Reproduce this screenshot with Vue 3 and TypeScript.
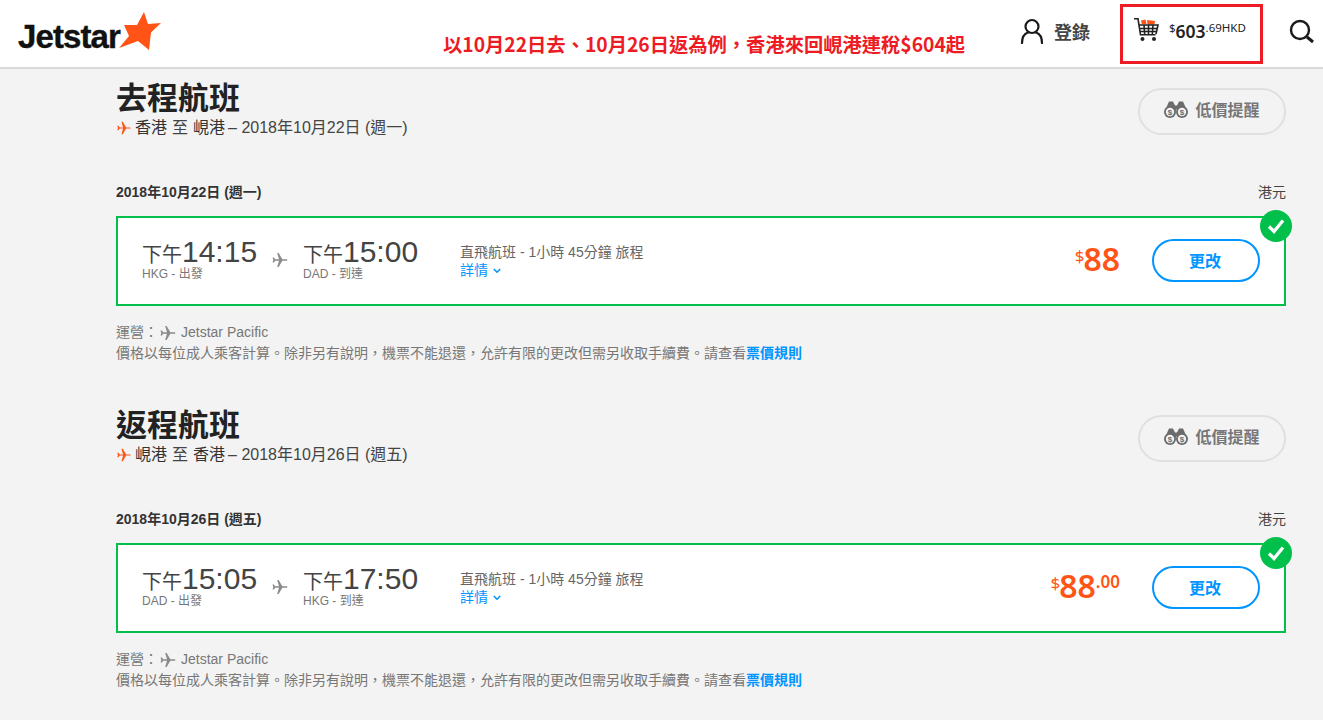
<script setup lang="ts">
interface Flight {
  title: string
  from: string
  to: string
  date: string
  dep: string
  arr: string
  depCode: string
  arrCode: string
  cents: string
}
const flights: Flight[] = [
  { title: '去程航班', from: '香港', to: '峴港', date: '2018年10月22日 (週一)', dep: '14:15', arr: '15:00', depCode: 'HKG', arrCode: 'DAD', cents: '' },
  { title: '返程航班', from: '峴港', to: '香港', date: '2018年10月26日 (週五)', dep: '15:05', arr: '17:50', depCode: 'DAD', arrCode: 'HKG', cents: '.00' },
]
const plane = 'M21 12.6c0-.8-.7-1.400-1.600-1.400h-4.600L10.400 3.600H8.600l2.200 7.600H6.300L4.600 9H3l1 3-1 3h1.600l1.700-2.200h4.500l-2.200 7.600h1.800l4.400-7.600h4.600c.9 0 1.600-.4 1.600-1.200z'
</script>

<template>
  <div class="page">
    <header class="topbar">
      <div class="logo">
        <span class="logo-text">Jetstar</span>
        <svg class="logo-star" viewBox="0 0 42 38" width="42" height="38"><path d="M25 0l4 12 13-1-10 9.500L30 38 19 29 0 36l10-12-5-11 13 0z" fill="#ff5416"/></svg>
      </div>
      <div class="promo">以10月22日去、10月26日返為例，香港來回峴港連稅$604起</div>
      <div class="login">
        <svg width="24" height="26" viewBox="0 0 24 26" fill="none" stroke="#1a1a1a" stroke-width="2.200"><circle cx="12" cy="8.500" r="6.500"/><path d="M2 25c0-6 3-9.500 6-10.500M22 25c0-6-3-9.500-6-10.500" stroke-linecap="round"/></svg>
        <span>登錄</span>
      </div>
      <div class="cart">
        <svg width="25" height="24" viewBox="0 0 25 24">
          <path d="M7 2.500l4.500-1 1 4.500H7.800z" fill="#ff5416"/><path d="M13 2l8 1-.5 3.500H13.500z" fill="#ff5416"/>
          <path d="M0 .8h4l2.500 16h15M5 7h19l-2 9M5.800 10.500H23M6.300 13.500h16M10 7l.7 9.500M14.500 7v9.500M19 7l-.7 9.500" fill="none" stroke="#222" stroke-width="1.600"/>
          <circle cx="8.500" cy="21" r="2" fill="#222"/><circle cx="20" cy="21" r="2" fill="#222"/>
        </svg>
        <div class="cart-price"><sup>$</sup><b>603</b><sup>.69HKD</sup></div>
      </div>
      <svg class="search" width="26" height="26" viewBox="0 0 26 26" fill="none" stroke="#1a1a1a"><circle cx="11" cy="11" r="9" stroke-width="2.400"/><path d="M18 18l6 5" stroke-width="3"/></svg>
    </header>

    <main class="main">
      <section v-for="f in flights" :key="f.title" class="leg">
        <div class="leg-head">
          <div>
            <h1>{{ f.title }}</h1>
            <div class="route">
              <svg class="route-plane" width="18" height="18" viewBox="0 0 24 24"><path :d="plane" fill="#ff5416"/></svg>
              <b>{{ f.from }}</b><span>至</span><b>{{ f.to }}</b><span class="route-date">– {{ f.date }}</span>
            </div>
          </div>
          <button class="alert">
            <svg width="24" height="18" viewBox="0 0 24 18">
              <path d="M5 1.500h4l2 4h2l2-4h4l4 9h-9l-1-2-1 2H1z" fill="#6b6b6b"/>
              <circle cx="6" cy="12" r="6" fill="#6b6b6b"/><circle cx="18" cy="12" r="6" fill="#6b6b6b"/>
              <circle cx="6" cy="12" r="4.200" fill="#f3f3f3"/><circle cx="18" cy="12" r="4.200" fill="#f3f3f3"/>
              <text x="6" y="15" class="lens">$</text><text x="18" y="15" class="lens">$</text>
            </svg>
            <span>低價提醒</span>
          </button>
        </div>

        <div class="date-row"><b>{{ f.date }}</b><span>港元</span></div>

        <div class="card">
          <div class="time dep">
            <div class="clock"><span>下午</span>{{ f.dep }}</div>
            <div class="code">{{ f.depCode }} - 出發</div>
          </div>
          <svg class="mid-plane" width="20" height="20" viewBox="0 0 24 24"><path :d="plane" fill="#8b8b8b"/></svg>
          <div class="time arr">
            <div class="clock"><span>下午</span>{{ f.arr }}</div>
            <div class="code">{{ f.arrCode }} - 到達</div>
          </div>
          <div class="info">
            <div>直飛航班 - 1小時 45分鐘 旅程</div>
            <a>詳情 <svg width="8" height="6" viewBox="0 0 8 6" fill="none" stroke="#0095ff" stroke-width="1.600"><path d="M.8 1l3.200 3.200L7.200 1"/></svg></a>
          </div>
          <div class="price"><sup>$</sup><b>88</b><sup v-if="f.cents" class="cents">{{ f.cents }}</sup></div>
          <button class="change">更改</button>
          <div class="check">
            <svg width="18" height="16" viewBox="0 0 18 16" fill="none" stroke="#fff" stroke-width="3.200"><path d="M2 8.500l5 5 9-11"/></svg>
          </div>
        </div>

        <div class="notes">
          <div class="op">運營：<svg width="20" height="20" viewBox="0 0 24 24"><path :d="plane" fill="#8b8b8b"/></svg>Jetstar Pacific</div>
          <div>價格以每位成人乘客計算。除非另有說明，機票不能退還，允許有限的更改但需另收取手續費。請查看<a>票價規則</a></div>
        </div>
      </section>
    </main>
  </div>
</template>

<style>
html, body { margin: 0; background: #f3f3f3; }
</style>

<style scoped>
.page {
  height: 720px;
  overflow: hidden;
  background: #f3f3f3;
  font-family: "Liberation Sans", "Noto Sans CJK TC", sans-serif;
  color: #333;
}
.topbar {
  position: relative;
  height: 67px;
  background: #fff;
  border-bottom: 2px solid #d9d9d9;
  display: flex;
  align-items: center;
}
.logo { display: flex; align-items: center; margin-left: 18px; }
.logo-text {
  font-size: 33px;
  font-weight: 700;
  color: #111;
  letter-spacing: -0.900px;
  margin-top: 6px;
  -webkit-text-stroke: 0.400px #111;
}
.logo-star { margin-left: -1px; margin-top: -5px; }
.promo {
  position: absolute;
  left: 443px;
  top: 32px;
  font-family: "Noto Sans CJK TC", sans-serif;
  font-size: 19.300px;
  line-height: 24px;
  font-weight: 700;
  color: #ed1c24;
  white-space: nowrap;
}
.login {
  margin-left: auto;
  display: flex;
  align-items: center;
  gap: 10px;
  font-size: 18px;
  font-weight: 700;
  color: #444;
  margin-top: -5px;
}
.cart {
  box-sizing: border-box;
  width: 143px;
  height: 60px;
  margin: 1px 0 0 30px;
  border: 3px solid #ed1c24;
  padding: 0 0 8px 11px;
  display: flex;
  align-items: center;
  gap: 10px;
}
.cart-price { font-family: "Noto Sans", sans-serif; font-size: 12px; color: #222; white-space: nowrap; margin-top: 2px; }
.cart-price b { font-size: 17.500px; font-weight: 600; }
.cart-price sup { font-size: 11.500px; line-height: 0; vertical-align: 6px; }
.search { margin: -4px 8px 0 26px; }

.main { padding: 9px 37px 0 116px; }
.leg { height: 327px; }
.leg-head { display: flex; justify-content: space-between; align-items: flex-start; height: 92px; }
h1 {
  margin: 0 0 -2px;
  font-size: 31px;
  line-height: 42px;
  font-weight: 700;
  color: #222;
}
.route {
  display: flex;
  align-items: center;
  gap: 5px;
  font-size: 16px;
  line-height: 20px;
  color: #444;
  margin-left: -1px;
}
.route-plane { margin-right: -3px; }
.route-date { margin-left: -2px; }
.route b { font-weight: 400; color: #333; }
.alert {
  box-sizing: border-box;
  width: 148px;
  height: 47px;
  margin-top: 10px;
  padding: 0 0 6px;
  border: 2px solid #e0e0e0;
  border-radius: 24px;
  background: transparent;
  display: flex;
  align-items: center;
  justify-content: center;
  gap: 7px;
  font-family: inherit;
  font-size: 16px;
  font-weight: 700;
  color: #777;
}
.lens {
  font-size: 8px;
  font-weight: 700;
  text-anchor: middle;
  fill: #6b6b6b;
}
.date-row {
  display: flex;
  justify-content: space-between;
  font-size: 14px;
  line-height: 18px;
  margin-top: 13px;
  color: #444;
}
.date-row b { color: #333; }
.card {
  position: relative;
  box-sizing: border-box;
  height: 90px;
  margin-top: 15px;
  background: #fff;
  border: 2px solid #00c04b;
  display: flex;
  align-items: center;
}
.time { margin-top: -5px; color: #777; }
.dep { margin-left: 24px; width: 128px; }
.arr { width: 157px; }
.clock { font-size: 30px; line-height: 32px; color: #444; white-space: nowrap; }
.clock span { font-size: 20px; }
.code { font-size: 12px; line-height: 14px; color: #777; margin-top: -4px; }
.mid-plane { margin-right: 13px; margin-top: -2px; }
.info { font-size: 14px; line-height: 18px; color: #666; }
.info a { color: #0095ff; display: block; }
.info a svg { margin-left: 1px; vertical-align: 1px; }
.price {
  margin-left: auto;
  font-family: "Noto Sans", sans-serif;
  color: #ff5416;
  white-space: nowrap;
  line-height: 40px;
  margin-right: 32px;
  margin-top: 2px;
}
.price b { font-size: 32px; font-weight: 600; }
.price sup { font-size: 17px; line-height: 0; vertical-align: 9px; margin-right: -1px; }
.price .cents { font-size: 17px; font-weight: 600; vertical-align: 10px; margin-right: 0; }
.change {
  box-sizing: border-box;
  width: 108px;
  height: 43px;
  margin: -2px 24px 0 0;
  padding: 0 2px 0 0;
  border: 2px solid #0095ff;
  border-radius: 22px;
  background: #fff;
  font-family: inherit;
  font-size: 16px;
  font-weight: 700;
  color: #0095ff;
}
.check {
  position: absolute;
  right: -8px;
  top: -8px;
  width: 32px;
  height: 32px;
  border-radius: 50%;
  background: #00c04b;
  display: flex;
  align-items: center;
  justify-content: center;
}
.notes { margin-top: 16px; font-size: 14px; line-height: 21px; color: #777; }
.op { display: flex; align-items: center; gap: 3px; }
.op svg { margin-left: -3px; }
.notes a { color: #0095ff; font-weight: 700; }
</style>
